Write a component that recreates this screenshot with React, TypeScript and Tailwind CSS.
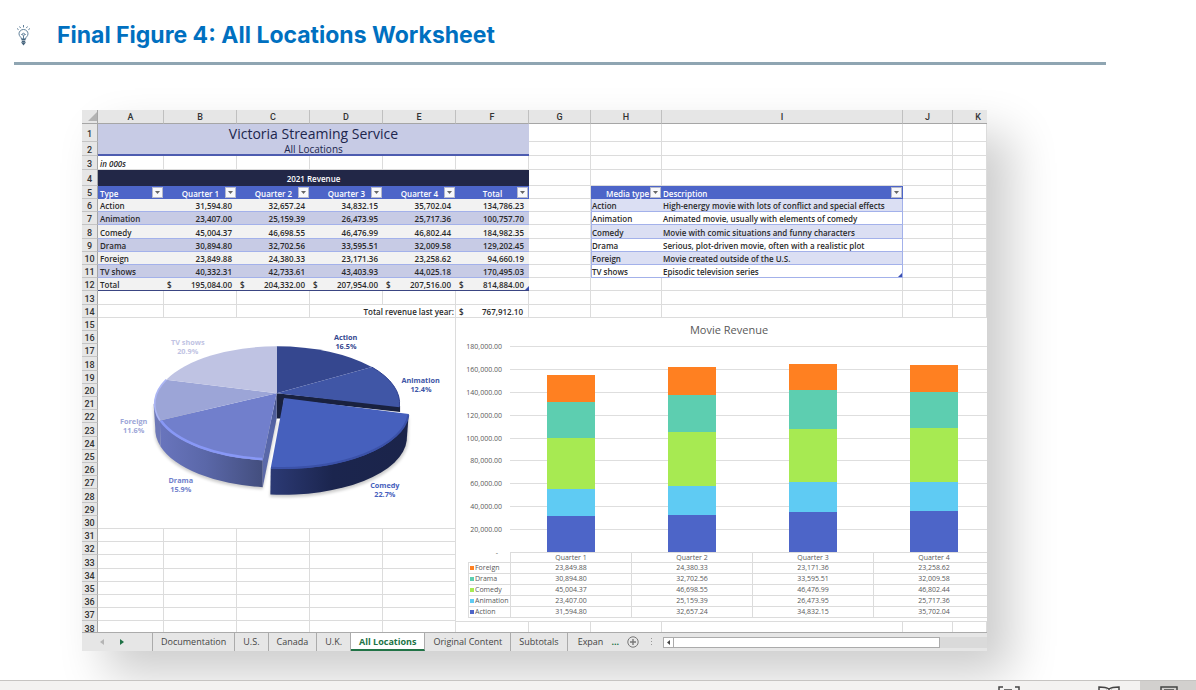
import React, { useState } from 'react';

interface RevenueRow {
  type: string;
  quarters: number[];
  total: number;
  description: string;
}

const revenue: RevenueRow[] = [
  { type: 'Action', quarters: [31594.8, 32657.24, 34832.15, 35702.04], total: 134786.23, description: 'High-energy movie with lots of conflict and special effects' },
  { type: 'Animation', quarters: [23407, 25159.39, 26473.95, 25717.36], total: 100757.7, description: 'Animated movie, usually with elements of comedy' },
  { type: 'Comedy', quarters: [45004.37, 46698.55, 46476.99, 46802.44], total: 184982.35, description: 'Movie with comic situations and funny characters' },
  { type: 'Drama', quarters: [30894.8, 32702.56, 33595.51, 32009.58], total: 129202.45, description: 'Serious, plot-driven movie, often with a realistic plot' },
  { type: 'Foreign', quarters: [23849.88, 24380.33, 23171.36, 23258.62], total: 94660.19, description: 'Movie created outside of the U.S.' },
  { type: 'TV shows', quarters: [40332.31, 42733.61, 43403.93, 44025.18], total: 170495.03, description: 'Episodic television series' },
];

const totals = [195084, 204332, 207954, 207516, 814884];
const quarterNames = ['Quarter 1', 'Quarter 2', 'Quarter 3', 'Quarter 4'];
const columns = ['A', 'B', 'C', 'D', 'E', 'F', 'G', 'H', 'I', 'J'];
const tabs = ['Documentation', 'U.S.', 'Canada', 'U.K.', 'All Locations', 'Original Content', 'Subtotals', 'Expan'];

const series = [
  { name: 'Action', fill: '#4d65c8' },
  { name: 'Animation', fill: '#5fcbf3' },
  { name: 'Comedy', fill: '#a7ea52' },
  { name: 'Drama', fill: '#5dceb0' },
  { name: 'Foreign', fill: '#ff8021' },
];

const money = (n: number) => n.toLocaleString('en-US', { minimumFractionDigits: 2, maximumFractionDigits: 2 });

const valuesOf = (name: string) => revenue.find(r => r.type === name)?.quarters || [];

// Every fifth row is a pixel taller
const rowHeight = (row: number) => (row % 5 === 3 ? 'h-[14px]' : 'h-[13px]');

const grid = 'border-r border-b border-[#dcdcdc]';
const tableLine = 'border-b border-[#a3b1ea]';
const headFont = "font-['Roboto',sans-serif] text-[9px] font-medium text-[#333]";

const RowHead: React.FC<{ n: number }> = ({ n }) => (
  <th scope="row" className={`border-r border-b border-r-[#a6a6a6] border-b-[#c4c4c4] bg-[#e6e6e6] text-center ${headFont}`}>
    {n}
  </th>
);

const Blank: React.FC<{ count: number }> = ({ count }) => (
  <>
    {Array.from({ length: count }, (_, i) => <td key={i} className={grid}></td>)}
  </>
);

const FilterButton: React.FC<{ label: string }> = ({ label }) => (
  <button type="button" aria-label={`Filter ${label}`} className="flex h-[11px] w-[11px] shrink-0 items-center justify-center border border-[#b5b9cc] bg-[#f8f8fb]">
    <svg width="5" height="3" viewBox="0 0 5 3"><path d="M0 0h5L2.500 3z" fill="#666" /></svg>
  </button>
);

// Header cell with the label centred over the whole column
const FilterHead: React.FC<{ label: string; align?: string }> = ({ label, align = 'text-center' }) => (
  <th scope="col" className="relative bg-[#4d65c8] font-semibold text-white">
    <div className={align}>{label}</div>
    <div className="absolute top-px right-px"><FilterButton label={label} /></div>
  </th>
);

const Accounting: React.FC<{ value: number }> = ({ value }) => (
  <div className="flex justify-between pr-[5px] pl-[3px]"><span>$</span><span>{money(value)}</span></div>
);

const PieChart: React.FC = () => (
  <svg viewBox="54 9 1071 633" className="absolute top-[208px] left-4 h-[211px] w-[358px] border-r border-b border-[#dcdcdc] bg-white" role="img" aria-label="Revenue by type">
    <defs>
      <linearGradient id="dramaWall" x1="0" x2="1"><stop offset="0" stopColor="#6975bd" /><stop offset="0.45" stopColor="#5a67a8" /><stop offset="1" stopColor="#434e7e" /></linearGradient>
      <linearGradient id="comedyWall" x1="0" x2="1"><stop offset="0" stopColor="#2c3a75" /><stop offset="0.45" stopColor="#1b254e" /><stop offset="1" stopColor="#1b244a" /></linearGradient>
      <linearGradient id="cutFace" x1="0" y1="0" x2="0" y2="1"><stop offset="0" stopColor="#434f86" /><stop offset="0.4" stopColor="#5666a9" /><stop offset="1" stopColor="#5f6ba8" /></linearGradient>
      <filter id="soft" x="-10%" y="-10%" width="120%" height="130%"><feGaussianBlur stdDeviation="5" /></filter>
      <filter id="rim" x="-10%" y="-10%" width="120%" height="120%"><feGaussianBlur stdDeviation="2" /></filter>
    </defs>
    <g fill="#000" opacity="0.2" filter="url(#soft)">
      <path d="M219 275L222 352A366 175 0 0 0 548 525L592 320Z" />
      <path d="M600 320L569 548A376 174 0 0 0 986 384L988 310Z" />
    </g>
    <path d="M590 236L962 274V292L612 254L604 312H590Z" fill="#19213f" />
    <path d="M219 267L224 340A366 175 0 0 0 240 396L238 318Z" fill="#6e79b8" />
    <path d="M238 318A372 173 0 0 0 548 438V519A366 175 0 0 1 240 396Z" fill="url(#dramaWall)" />
    <path d="M590 236V312L548 519V438Z" fill="url(#cutFace)" />
    <path d="M590 236V94A372 173 0 0 1 877 157Z" fill="#35478f" />
    <path d="M590 236L877 157A372 173 0 0 1 960 278Z" fill="#4056a6" />
    <path d="M590 236L548 438A372 173 0 0 1 238 318Z" fill="#717fcc" />
    <path d="M590 236L238 318A372 173 0 0 1 257 195Z" fill="#9ca5d7" />
    <path d="M590 236L257 195A372 173 0 0 1 590 94Z" fill="#bfc3e3" />
    <path d="M877 157A372 173 0 0 1 960 276" fill="none" stroke="#2e4190" strokeWidth="3" />
    <path d="M257 195A372 173 0 0 0 238 318" fill="none" stroke="#acb6f4" strokeWidth="5" filter="url(#rim)" />
    <path d="M241 319A368 169 0 0 0 547 434" fill="none" stroke="#8898f6" strokeWidth="8" filter="url(#rim)" />
    <path d="M988 298L982 378A374 172 0 0 1 571 541L572 463Z" fill="url(#comedyWall)" />
    <path d="M612 250L988 298A380 173 0 0 1 572 463Z" fill="#4660bd" />
    <path d="M987 302A380 173 0 0 1 573 460" fill="none" stroke="#3a51a8" strokeWidth="6" filter="url(#rim)" />
    <g fontSize="22" fontWeight="700" textAnchor="middle">
      <g fill="#35478f"><text x="798" y="74">Action</text><text x="799" y="101">16.5%</text></g>
      <g fill="#4056a6"><text x="1024" y="206">Animation</text><text x="1025" y="233">12.4%</text></g>
      <g fill="#4660bd"><text x="916" y="522">Comedy</text><text x="916" y="549">22.7%</text></g>
      <g fill="#717fcc"><text x="301" y="506">Drama</text><text x="301" y="533">15.9%</text></g>
      <g fill="#9ca5d7"><text x="159" y="329">Foreign</text><text x="159" y="356">11.6%</text></g>
      <g fill="#bfc3e3"><text x="322" y="91">TV shows</text><text x="322" y="118">20.9%</text></g>
    </g>
  </svg>
);

const PLOT_BOTTOM = 234;
const PLOT_HEIGHT = 206;
const MAX_VALUE = 180000;
const ticks = [180000, 160000, 140000, 120000, 100000, 80000, 60000, 40000, 20000, 0];
const toPixels = (value: number) => Math.round((value / MAX_VALUE) * PLOT_HEIGHT);

const MovieChart: React.FC = () => (
  <div className="absolute top-[208px] right-0 left-[373px] h-[304px] overflow-hidden border-b border-l border-[#dcdcdc] bg-white text-[7px] leading-[8px] font-medium text-[#595959]">
    <svg width="546" height="234" viewBox="0 0 546 234" className="block overflow-visible" role="img" aria-label="Movie Revenue by quarter">
      <text x="273" y="16" textAnchor="middle" fontSize="11" fill="#595959">Movie Revenue</text>
      {ticks.map(tick => {
        const y = PLOT_BOTTOM - toPixels(tick);
        return (
          <g key={tick}>
            {tick > 0 && <path d={`M54 ${y + 0.5}H546`} stroke="#dedede" />}
            <text x={tick > 0 ? 46 : 42} y={y + 3} textAnchor="end" fill="#595959">{tick > 0 ? money(tick) : '-'}</text>
          </g>
        );
      })}
      {quarterNames.map((name, q) => {
        let sum = 0;
        return (
          <g key={name}>
            {series.map(s => {
              const from = toPixels(sum);
              sum += valuesOf(s.name)[q];
              const to = toPixels(sum);
              return <rect key={s.name} x={91 + q * 121} y={PLOT_BOTTOM - to} width="48" height={to - from} fill={s.fill} />;
            })}
          </g>
        );
      })}
    </svg>
    <table className="ml-3 w-[527px] table-fixed border-separate border-spacing-0 text-center">
      <colgroup>
        <col className="w-[43px]" />
        <col span={4} />
      </colgroup>
      <thead>
        <tr className="h-[11px]">
          <td className={grid}></td>
          {quarterNames.map(name => (
            <th key={name} scope="col" className="border-t border-r border-b border-[#dcdcdc] font-medium">{name}</th>
          ))}
        </tr>
      </thead>
      <tbody>
        {[...series].reverse().map(s => (
          <tr key={s.name} className="h-[11px]">
            <th scope="row" className="border-r border-b border-l border-[#dcdcdc] font-medium">
              <div className="flex items-center gap-px pl-px">
                <svg width="4" height="4" className="shrink-0"><rect width="4" height="4" fill={s.fill} /></svg>
                {s.name}
              </div>
            </th>
            {valuesOf(s.name).map(v => <td key={v} className={grid}>{money(v)}</td>)}
          </tr>
        ))}
      </tbody>
    </table>
  </div>
);

const Sheet: React.FC = () => (
  <table className="w-full table-fixed border-separate border-spacing-0 text-[8px] leading-[10px] font-semibold text-[#2a2a2a] [&_tbody_td]:pt-0.5 [&_tbody_th]:pt-0.5">
    <colgroup>
      <col className="w-4" />
      <col className="w-[66px]" />
      <col span={5} className="w-[73px]" />
      <col className="w-[62px]" />
      <col className="w-[71px]" />
      <col className="w-[241px]" />
      <col className="w-[50px]" />
      <col />
    </colgroup>
    <thead>
      <tr className="h-[14px] bg-[#e6e6e6]">
        <td className="border-r border-b border-[#a6a6a6]">
          <svg width="9" height="9" viewBox="0 0 9 9" className="ml-auto block"><path d="M9 0v9H0z" fill="#b3b3b3" /></svg>
        </td>
        {columns.map(c => (
          <th key={c} scope="col" className={`border-r border-b border-r-[#c0c0c0] border-b-[#a6a6a6] ${headFont}`}>{c}</th>
        ))}
        <th scope="col" className={`border-b border-[#a6a6a6] pr-1.5 text-right ${headFont}`}>K</th>
      </tr>
    </thead>
    <tbody>
      <tr className="h-[18px]">
        <RowHead n={1} />
        <td colSpan={6} className="bg-[#c7cbe5] text-center text-[14px] leading-4 font-normal text-[#20264d]">Victoria Streaming Service</td>
        <Blank count={5} />
      </tr>
      <tr className="h-[14px]">
        <RowHead n={2} />
        <td colSpan={6} className="border-b-2 border-[#4d5cb0] bg-[#c7cbe5] text-center text-[10px] leading-[10px] font-normal text-[#20264d]">All Locations</td>
        <Blank count={5} />
      </tr>
      <tr className="h-[14px]">
        <RowHead n={3} />
        <td className={`${grid} pl-0.5 italic`}>in 000s</td>
        <Blank count={10} />
      </tr>
      <tr className="h-4">
        <RowHead n={4} />
        <td colSpan={6} className="bg-[#222747] text-center text-white">2021 Revenue</td>
        <Blank count={5} />
      </tr>
      <tr className="h-[13px]">
        <RowHead n={5} />
        <FilterHead label="Type" align="pl-0.5 text-left" />
        {quarterNames.map(name => <FilterHead key={name} label={name} />)}
        <FilterHead label="Total" />
        <Blank count={1} />
        <FilterHead label="Media type" align="pr-[13px] text-right" />
        <FilterHead label="Description" align="pl-px text-left" />
        <Blank count={2} />
      </tr>
      {revenue.map((row, i) => {
        const band = i % 2 ? 'bg-[#c7cbe5]' : 'bg-[#f2f2f2]';
        const listBand = i % 2 ? 'bg-white' : 'bg-[#dbdff3]';
        return (
          <tr key={row.type} className={rowHeight(i + 6)}>
            <RowHead n={i + 6} />
            <td className={`${tableLine} ${band} pl-0.5`}>{row.type}</td>
            {[...row.quarters, row.total].map(v => (
              <td key={v} className={`${tableLine} ${band} pr-[5px] text-right`}>{money(v)}</td>
            ))}
            <Blank count={1} />
            <td className={`${tableLine} ${listBand} border-l`}>{row.type}</td>
            <td className={`${tableLine} ${listBand} relative border-r pl-px whitespace-nowrap`}>
              {row.description}
              {i === 5 && <svg width="4" height="4" className="absolute right-0 bottom-0"><path d="M4 0v4H0z" fill="#3a4fb0" /></svg>}
            </td>
            <Blank count={2} />
          </tr>
        );
      })}
      <tr className="h-[13px]">
        <RowHead n={12} />
        <td className="border-b border-[#3a4583] bg-[#f2f2f2] pl-0.5">Total</td>
        {totals.map(v => (
          <td key={v} className="relative border-b border-[#3a4583] bg-[#f2f2f2]">
            <Accounting value={v} />
            {v === 814884 && <svg width="4" height="4" className="absolute right-0 bottom-0"><path d="M4 0v4H0z" fill="#3a4fb0" /></svg>}
          </td>
        ))}
        <Blank count={5} />
      </tr>
      <tr className="h-[14px]">
        <RowHead n={13} />
        <Blank count={11} />
      </tr>
      <tr className="h-[13px]">
        <RowHead n={14} />
        <Blank count={3} />
        <td colSpan={2} className={`${grid} pr-px text-right`}>Total revenue last year:</td>
        <td className={grid}><Accounting value={767912.1} /></td>
        <Blank count={5} />
      </tr>
      {Array.from({ length: 24 }, (_, i) => i + 15).map(n => (
        <tr key={n} className={rowHeight(n)}>
          <RowHead n={n} />
          <Blank count={11} />
        </tr>
      ))}
    </tbody>
  </table>
);

const App: React.FC = () => {
  const [activeTab, setActiveTab] = useState('All Locations');

  return (
    <div className="flex min-h-screen flex-col overflow-hidden bg-white font-['Open_Sans','Noto_Sans',sans-serif]">
      {/* Heading */}
      <header className="mr-[90px] ml-3.5 flex h-[65px] items-center gap-[23px] border-b-3 border-[#8fa5b2] pt-2">
        <svg width="20" height="24" viewBox="0 0 20 24" fill="none" stroke="#5f7f99" strokeWidth="1" className="shrink-0">
          <path d="M9.500 2V5M5.500 3.500L7 5.500M13.500 3.500L12 5.500M3 5.500L5 7M16 5.500L14 7" strokeDasharray="2 0.600" />
          <path d="M7.500 16C7.500 14 5 13.500 5 10.800A4.500 4.300 0 0 1 14 10.800C14 13.500 11.500 14 11.500 16Z" />
          <path d="M7.500 11.500Q9.500 9 11.500 11.500Q9.500 13 7.500 11.500M9.500 12.500V16" />
          <path d="M7.500 16.500H11.500M7.800 18.300H11.200M8.300 20H10.700L9.500 21.500Z" strokeWidth="1.300" stroke="#46647d" />
        </svg>
        <h1 className="font-['Inter',sans-serif] text-[23px] leading-8 font-bold whitespace-nowrap text-[#0070c0]">Final Figure 4: All Locations Worksheet</h1>
      </header>

      <main className="grow">
        <div className="mt-[45px] mr-[209px] ml-[82px] bg-[#e6e6e6] shadow-[24px_24px_44px_rgba(0,0,0,0.2)]">
          <div className="relative h-[522px] overflow-hidden bg-white">
            <Sheet />
            <PieChart />
            <MovieChart />
          </div>

          {/* Sheet tabs */}
          <div className="flex h-[19px] items-stretch overflow-hidden border-t border-[#ababab] text-[9px] leading-3 text-[#444]">
            <div className="flex w-[71px] shrink-0 items-center gap-4 border-r border-[#ababab] pl-[18px]">
              <button type="button" aria-label="Previous sheet"><svg width="4" height="6"><path d="M4 0v6L0 3z" fill="#b5b5b5" /></svg></button>
              <button type="button" aria-label="Next sheet"><svg width="4" height="6"><path d="M0 0v6l4-3z" fill="#1e7145" /></svg></button>
            </div>
            <nav className="flex shrink-0">
              {tabs.map(tab => (
                <button
                  key={tab}
                  type="button"
                  onClick={() => setActiveTab(tab)}
                  className={`border-r border-[#ababab] px-2 whitespace-nowrap last:border-r-0 last:pl-2.5 ${activeTab === tab ? 'border-b-2 border-b-[#217346] bg-white pt-0.5 font-bold text-[#217346]' : ''}`}
                >
                  {tab}
                </button>
              ))}
            </nav>
            <div className="flex grow items-center">
              <button type="button" aria-label="More sheets" className="font-bold text-[#217346]">...</button>
              <button type="button" aria-label="New sheet" className="ml-2">
                <svg width="12" height="12" viewBox="0 0 12 12" fill="none" stroke="#777"><circle cx="6" cy="6" r="5.200" /><path d="M6 3v6M3 6h6" strokeWidth="1.400" /></svg>
              </button>
              <svg width="2" height="8" className="mr-2.5 ml-3 shrink-0" fill="#999"><path d="M0 0h1v1H0zM0 3h1v1H0zM0 6h1v1H0z" /></svg>
              <div className="flex h-[11px] grow bg-[#dadada]">
                <button type="button" aria-label="Scroll left" className="flex w-[11px] items-center justify-center border border-[#ababab] bg-white"><svg width="3" height="5"><path d="M3 0v5L0 2.500z" fill="#444" /></svg></button>
                <div className="mr-[47px] grow border border-l-0 border-[#ababab] bg-white"></div>
              </div>
            </div>
          </div>
        </div>
      </main>

      {/* Status bar */}
      <footer className="flex h-2.5 justify-end overflow-hidden border-t border-[#c6c4c2] bg-[#f3f2f1]">
        <button type="button" aria-label="Focus" className="flex h-6 w-[60px] items-start pt-[5px] pl-2.5">
          <svg width="22" height="16" fill="none" stroke="#444" strokeWidth="1.500"><path d="M1 5V1H5M17 1H21V5M6 4H14" /></svg>
        </button>
        <button type="button" aria-label="Read mode" className="ml-8 flex h-6 w-[60px] items-start pt-[5px] pl-[18px]">
          <svg width="22" height="16" fill="none" stroke="#444" strokeWidth="1.500"><path d="M11 3Q8 1 1 1V12M11 3Q14 1 21 1V12M11 3V14M8 4L11 8L14 4" /></svg>
        </button>
        <button type="button" aria-label="Print layout" className="flex h-6 w-14 items-start bg-[#d2d0ce] pt-[5px] pl-5">
          <svg width="18" height="16" fill="none" stroke="#444" strokeWidth="1.500"><path d="M1 15V1H17V15M4 4H14" /></svg>
        </button>
      </footer>
    </div>
  );
};

export default App;
